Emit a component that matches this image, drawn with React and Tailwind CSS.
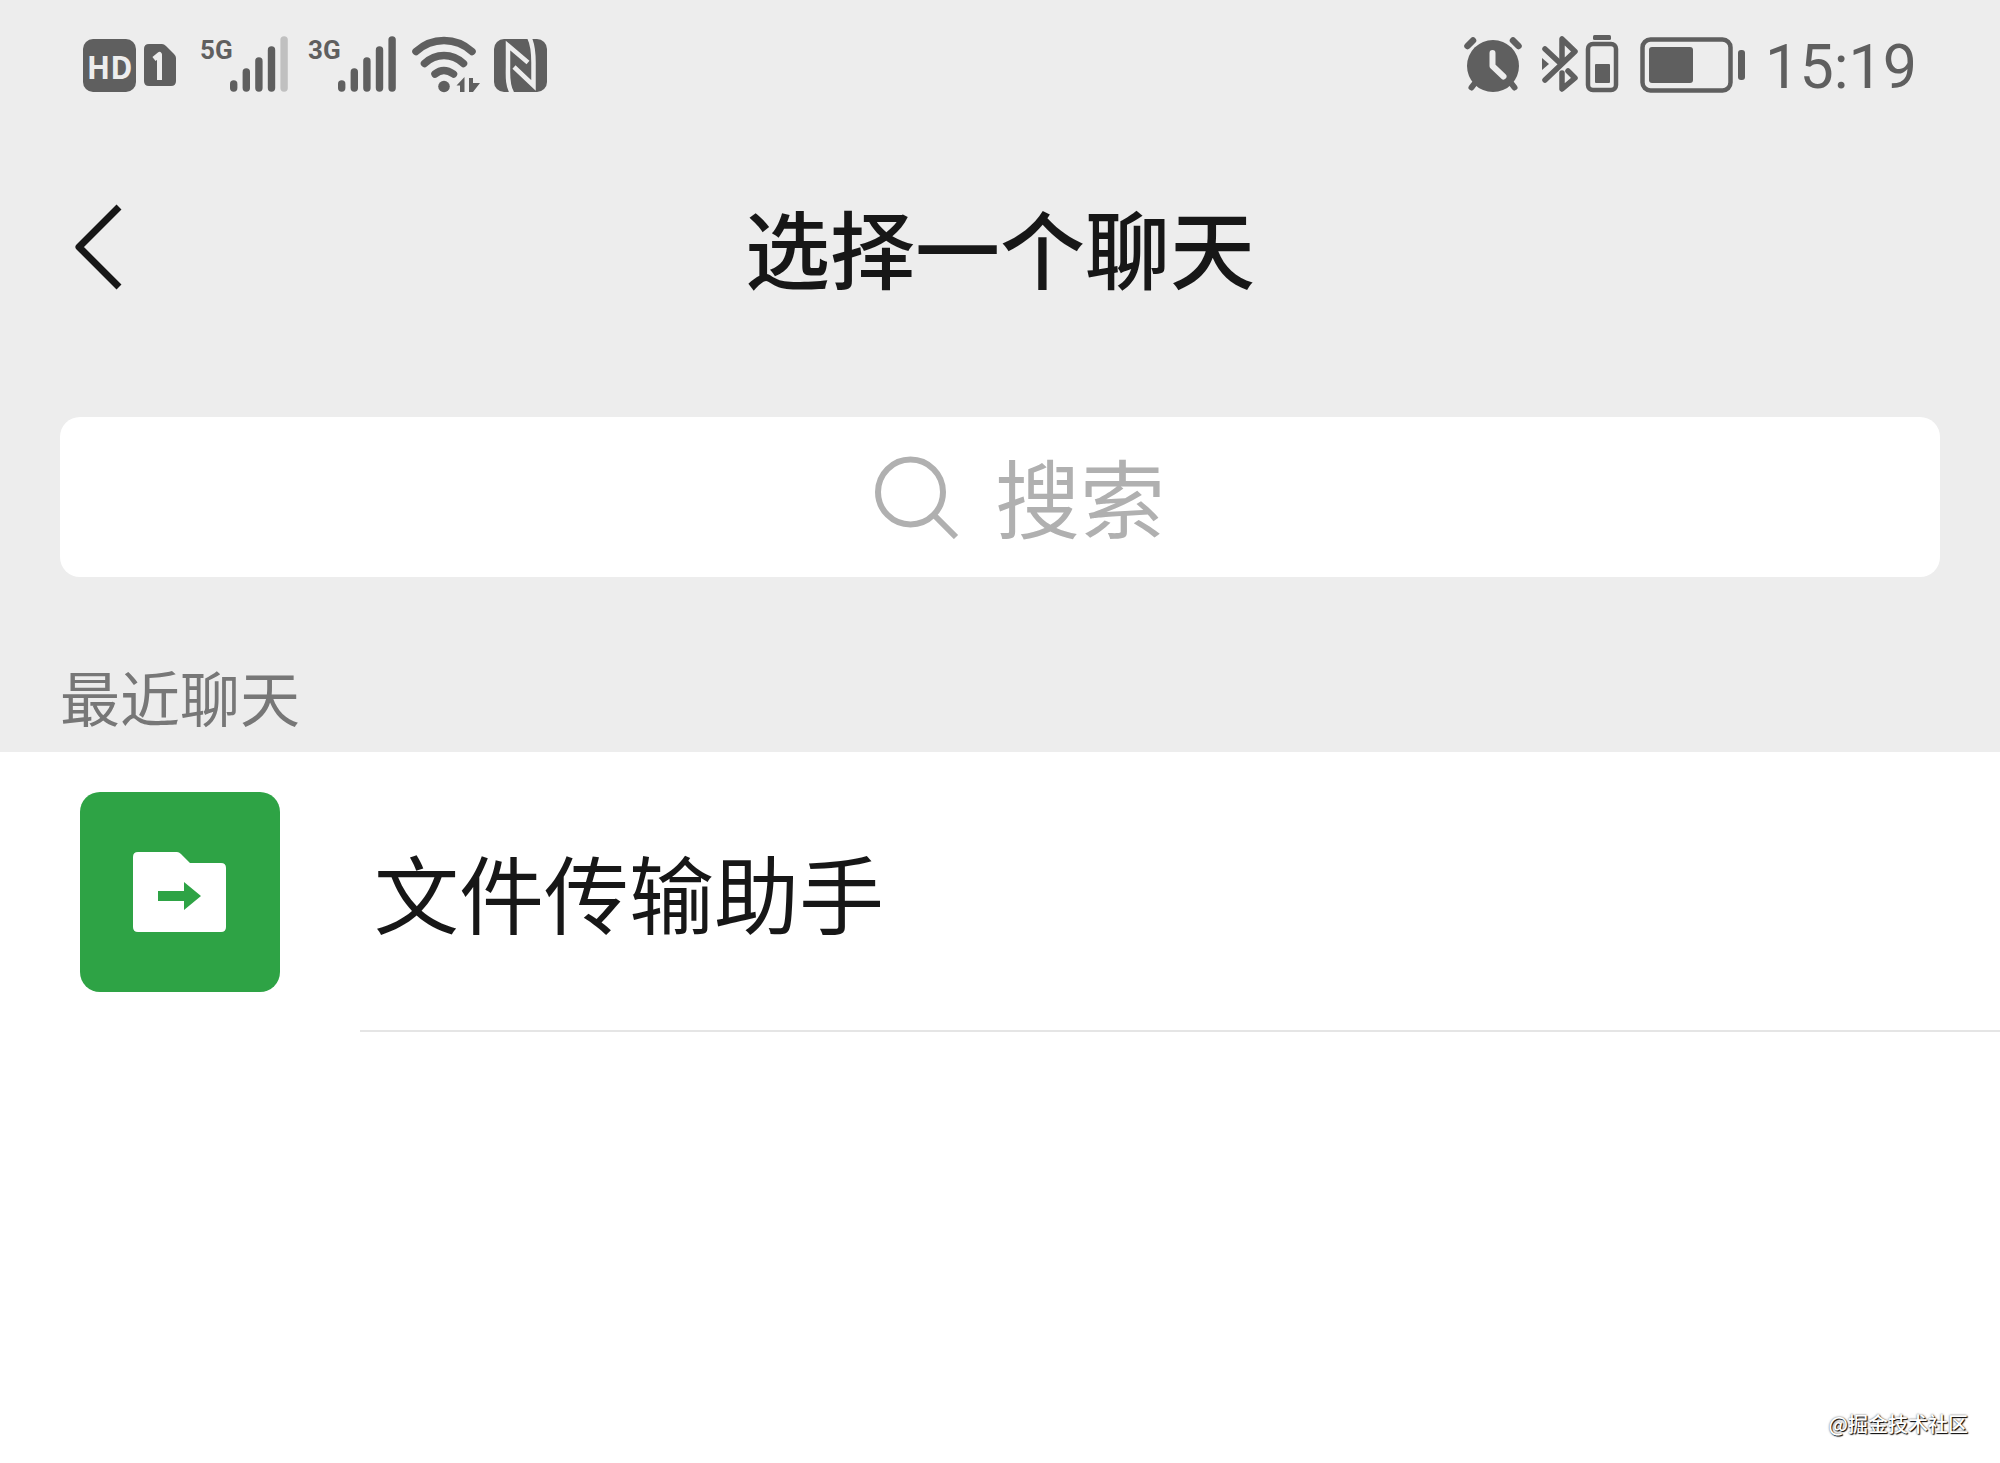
import { useState } from "react";

/* =====================================================
   STATUS BAR ICONS
   ===================================================== */
function SimBadge() {
  return (
    <svg width="32" height="42" viewBox="0 0 32 42" aria-hidden="true">
      <path
        d="M5 0H18Q20 0 22 2L30 10Q32 12 32 14V37Q32 42 27 42H5Q0 42 0 37V5Q0 0 5 0Z"
        fill="#5f5f5f"
      />
      <path
        d="M10 15L15.500 10.500V36"
        fill="none"
        stroke="#ededed"
        strokeWidth="5"
        strokeLinejoin="round"
      />
    </svg>
  );
}

const barTops = [49, 37, 26, 15, 5];

function Signal({ label, strength }) {
  return (
    <div className="relative h-[60px] w-[88px]">
      <span className="absolute top-0 left-0 font-[Roboto,sans-serif] text-[26px] leading-[30px] font-bold">
        {label}
      </span>
      <svg width="88" height="60" viewBox="0 0 88 60" aria-hidden="true">
        {barTops.map((top, i) => (
          <path
            key={top}
            d={`M${33.7 + i * 12.6} ${top}V53`}
            stroke={i < strength ? "#5f5f5f" : "#c0c0c0"}
            strokeWidth="7.400"
            strokeLinecap="round"
          />
        ))}
      </svg>
    </div>
  );
}

function WifiIcon() {
  return (
    <svg width="68" height="58" viewBox="0 0 68 58" aria-hidden="true">
      <g fill="none" stroke="#5f5f5f" strokeWidth="7.500" strokeLinecap="round">
        <path d="M4 15.500Q16 4.500 32 4.500T60 15.500" />
        <path d="M12.500 27.500Q21 19.500 32 19.500T51.500 27.500" />
        <path d="M23 38Q31.500 31 41.500 38" />
      </g>
      <circle cx="32" cy="50.500" r="5.800" fill="#5f5f5f" />
      <path
        d="M44.500 49.500L52.500 41V56H48V49.500ZM57 42H61V47H68L61 56H57Z"
        fill="#5f5f5f"
      />
    </svg>
  );
}

function NfcIcon() {
  return (
    <svg width="53" height="53" viewBox="0 0 53 53" aria-hidden="true">
      <rect width="53" height="53" rx="10" fill="#5f5f5f" />
      <g fill="none" stroke="#ededed" strokeWidth="4.500">
        <path d="M18 54C13 46 14 36 14 27V6.500L34 23.500" />
        <path d="M35.500 -1C40 8 39.500 18 39.500 27V46.500L20 28" />
      </g>
    </svg>
  );
}

function AlarmIcon() {
  return (
    <svg width="58" height="56" viewBox="0 0 58 56" aria-hidden="true">
      <g stroke="#5f5f5f" strokeLinecap="round">
        <path d="M3.500 9L9 3.500M49 3.500L54.500 9" strokeWidth="6.500" />
        <path d="M11 46L7.500 50.500M47 46L50.500 50.500" strokeWidth="6" />
      </g>
      <circle cx="29" cy="29" r="26" fill="#5f5f5f" />
      <path
        d="M28.500 16V29L39.500 39.500"
        fill="none"
        stroke="#ededed"
        strokeWidth="6"
        strokeLinecap="round"
        strokeLinejoin="round"
      />
    </svg>
  );
}

function BluetoothIcon() {
  return (
    <svg width="78" height="60" viewBox="0 0 78 60" aria-hidden="true">
      <g
        fill="none"
        stroke="#5f5f5f"
        strokeWidth="5.500"
        strokeLinecap="round"
        strokeLinejoin="round"
      >
        <path d="M3 14L18 28" />
        <path d="M3 45L33 16.500L20 4V28" />
        <path d="M26 36L33 43L20 54V38" />
      </g>
      <path d="M0 23L7 29L0 35Z" fill="#5f5f5f" />
      <rect x="51" y="0" width="18" height="5" rx="1.500" fill="#5f5f5f" />
      <rect
        x="46"
        y="9"
        width="28"
        height="46"
        rx="5"
        fill="none"
        stroke="#5f5f5f"
        strokeWidth="4.500"
      />
      <rect x="53" y="29" width="15" height="19" rx="1" fill="#5f5f5f" />
    </svg>
  );
}

function BatteryIcon() {
  return (
    <svg width="105" height="56" viewBox="0 0 105 56" aria-hidden="true">
      <rect
        x="2.500"
        y="2.500"
        width="88"
        height="51"
        rx="8"
        fill="none"
        stroke="#5f5f5f"
        strokeWidth="4.500"
      />
      <rect x="9" y="10" width="44" height="36" rx="3" fill="#5f5f5f" />
      <rect x="98" y="13" width="7" height="30" rx="3" fill="#5f5f5f" />
    </svg>
  );
}

function StatusBar() {
  return (
    <div className="flex items-center justify-between px-[83px] pt-8 text-[#5f5f5f]">
      <div className="flex items-center">
        <span className="flex size-[53px] items-center justify-center rounded-[10px] bg-[#5f5f5f] font-['Noto_Sans_CJK_SC',sans-serif] text-[31px] leading-none font-bold text-[#ededed]">
          HD
        </span>
        <div className="ml-2">
          <SimBadge />
        </div>
        <div className="ml-6 flex gap-5">
          <Signal label="5G" strength={4} />
          <Signal label="3G" strength={5} />
        </div>
        <div className="ml-4 flex items-center gap-[14px]">
          <WifiIcon />
          <NfcIcon />
        </div>
      </div>
      <div className="flex items-center gap-5">
        <AlarmIcon />
        <BluetoothIcon />
        <BatteryIcon />
        <time className="pt-1 font-[Roboto,sans-serif] text-[61px] leading-[62px]">
          15:19
        </time>
      </div>
    </div>
  );
}

/* =====================================================
   CHAT LIST
   ===================================================== */
function FolderIcon() {
  return (
    <svg width="94" height="80" viewBox="0 0 94 80" aria-hidden="true">
      <path
        d="M5 0H44Q46 0 48 2L57 11H88Q93 11 93 16V75Q93 80 88 80H5Q0 80 0 75V5Q0 0 5 0Z"
        fill="#fff"
      />
      <path d="M25 39H51V30L68 44L51 58V49H25Z" fill="#2ea345" />
    </svg>
  );
}

const chats = [{ id: 1, name: "文件传输助手" }];

function ChatRow({ name }) {
  return (
    <li>
      <a href="#chat" className="flex items-stretch pl-20">
        <div className="my-10 flex size-[200px] shrink-0 items-center justify-center rounded-[20px] bg-[#2ea345]">
          <FolderIcon />
        </div>
        <div className="ml-20 flex flex-1 items-center border-b-2 border-[#e5e5e5] pl-[14px] text-[85px] leading-[120px] text-[#171717]">
          {name}
        </div>
      </a>
    </li>
  );
}

function App() {
  const [keyword, setKeyword] = useState("");

  return (
    <div className="flex min-h-screen flex-col bg-white font-['Noto_Sans_CJK_SC',sans-serif]">
      <header className="bg-[#ededed]">
        <StatusBar />

        <div className="grid grid-cols-[1fr_auto_1fr] items-center px-[75px] pt-[88px]">
          <button type="button" aria-label="返回" className="justify-self-start">
            <svg width="48" height="88" viewBox="0 0 48 88" aria-hidden="true">
              <path
                d="M44 5L4 45L44 85"
                fill="none"
                stroke="#171717"
                strokeWidth="7"
                strokeLinejoin="round"
              />
            </svg>
          </button>
          <h1 className="text-[85px] leading-[120px] font-medium text-[#171717]">
            选择一个聊天
          </h1>
        </div>

        <label className="mx-[60px] mt-[111px] flex h-40 items-center justify-center gap-9 rounded-[20px] bg-white pl-10">
          <svg width="84" height="84" viewBox="0 0 84 84" aria-hidden="true">
            <g fill="none" stroke="#b0b0b0" strokeWidth="6">
              <circle cx="35.500" cy="37" r="32.500" />
              <path d="M59 60L81 82" />
            </g>
          </svg>
          <input
            type="text"
            aria-label="搜索"
            placeholder="搜索"
            value={keyword}
            onChange={(e) => setKeyword(e.target.value)}
            className="h-[120px] w-[170px] pb-1 text-[85px] text-[#171717] outline-none placeholder:text-[#b0b0b0]"
          />
        </label>

        <h2 className="px-[60px] pt-[75px] pb-3 text-[60px] leading-[88px] text-[#777]">
          最近聊天
        </h2>
      </header>

      <ul>
        {chats.map((chat) => (
          <ChatRow key={chat.id} name={chat.name} />
        ))}
      </ul>

      <footer className="mt-auto pr-8 pb-6 text-right text-[20px] leading-[30px] font-medium text-white [text-shadow:1px_1px_1px_#000,0_0_2px_#555]">
        @掘金技术社区
      </footer>
    </div>
  );
}

export default App;
